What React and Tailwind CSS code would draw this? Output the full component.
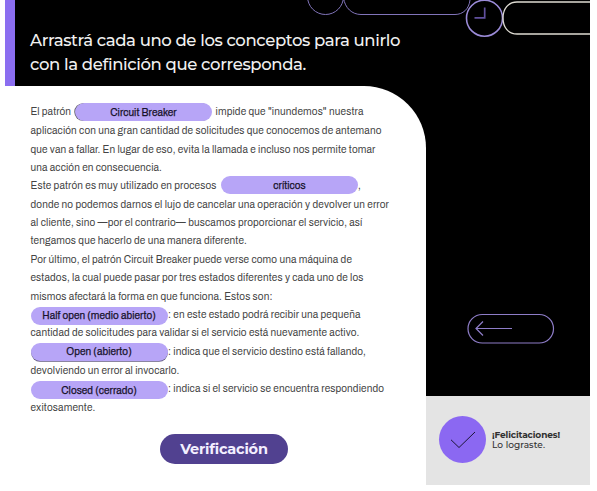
import { useLayoutEffect, useRef, useState } from "react";

// Text tracked so that it fills exactly the given measure.
function Fit({ w, children, className = "" }) {
  const ref = useRef(null);
  const [spacing, setSpacing] = useState(0);
  useLayoutEffect(() => {
    const natural = ref.current.getBoundingClientRect().width;
    setSpacing((w - natural) / children.length);
  }, []);
  return (
    <span ref={ref} className={`inline-block whitespace-pre ${className}`} style={{ letterSpacing: `${spacing}px` }}>
      {children}
    </span>
  );
}

function Pill({ w, children, className = "" }) {
  return (
    <span className={`flex h-[18px] w-[137px] shrink-0 items-center justify-center rounded-full bg-[#b7a5f7] text-[#17132b] ${className}`}>
      <Fit w={w} className="[-webkit-text-stroke:0.25px_#17132b]">{children}</Fit>
    </span>
  );
}

function Row({ h = "h-[18.5px]", children }) {
  return <div className={`flex items-center ${h}`}>{children}</div>;
}

export default function App() {
  return (
    <div className="h-[491px] w-[597px] overflow-hidden bg-white pl-[5px] font-['Archivo','Liberation_Sans',Arial,sans-serif]">
      <div className="relative flex h-[485px] w-[585.4px] flex-col overflow-hidden bg-black">
        <svg className="absolute left-0 top-0" width="586" height="86" viewBox="5 0 586 86" fill="none">
          <g stroke="#8174ba" strokeWidth="1">
            <circle cx="325.5" cy="-3.5" r="18" />
            <path d="M343.5 -2C345 8 352 14.5 361 14.5H455C463 14.5 469 9 470 0" />
          </g>
          <circle cx="484.5" cy="18.2" r="18" stroke="#9b8bd8" strokeWidth="1.6" />
          <path d="M484.7 7.5V17.8H474.5" stroke="#61509e" strokeWidth="1.7" />
          <path d="M592 2H517C508 2 503 9 503 18S508 34 517 34H592" stroke="#dedbd2" strokeWidth="1.3" />
        </svg>
        <header className="flex h-[86px] shrink-0 font-['Montserrat','Inter',sans-serif] text-[16.5px] font-medium leading-6 text-[#f0f0f0]">
          <div className="w-[10px] bg-[#8b6ef0]" />
          <h1 className="flex flex-col items-start pl-[15px] pt-[28px]">
            <Fit w={370}>Arrastrá cada uno de los conceptos para unirlo</Fit>
            <Fit w={276}>con la definición que corresponda.</Fit>
          </h1>
        </header>
        <div className="flex flex-1">
          <main className="flex w-[421px] flex-col rounded-tr-[62px] bg-white pl-[25.5px] pt-[16px] text-[10px] leading-[18px] text-[#444]">
            <Row h="h-[19px]">
              <Fit w={40.5}>El patrón</Fit>
              <Pill w={66.5} className="ml-[4px] mt-px pt-[2px] shadow-[-1px_0_0_-0.3px_#555]">Circuit Breaker</Pill>
              <Fit w={148} className="ml-[3.5px]">impide que "inundemos" nuestra</Fit>
            </Row>
            <Row h="h-[19px]"><Fit w={351}>aplicación con una gran cantidad de solicitudes que conocemos de antemano</Fit></Row>
            <Row h="h-[19px]"><Fit w={345}>que van a fallar. En lugar de eso, evita la llamada e incluso nos permite tomar</Fit></Row>
            <Row h="h-[18px]"><Fit w={131.5}>una acción en consecuencia.</Fit></Row>
            <Row>
              <Fit w={186}>Este patrón es muy utilizado en procesos</Fit>
              <Pill w={32.5} className="-mt-[2px] ml-[4.5px] pt-[2px]">críticos</Pill>
              <span>,</span>
            </Row>
            <Row h="h-[18px]"><Fit w={358.5}>donde no podemos darnos el lujo de cancelar una operación y devolver un error</Fit></Row>
            <Row><Fit w={332}>al cliente, sino —por el contrario— buscamos proporcionar el servicio, así</Fit></Row>
            <Row><Fit w={216.5}>tengamos que hacerlo de una manera diferente.</Fit></Row>
            <Row><Fit w={321.5}>Por último, el patrón Circuit Breaker puede verse como una máquina de</Fit></Row>
            <Row><Fit w={333}>estados, la cual puede pasar por tres estados diferentes y cada uno de los</Fit></Row>
            <Row><Fit w={242}>mismos afectará la forma en que funciona. Estos son:</Fit></Row>
            <Row h="h-[18px]">
              <Pill w={113.5} className="mt-px">Half open (medio abierto)</Pill>
              <Fit w={192.5} className="ml-[0.5px]">: en este estado podrá recibir una pequeña</Fit>
            </Row>
            <Row><Fit w={329}>cantidad de solicitudes para validar si el servicio está nuevamente activo.</Fit></Row>
            <Row h="h-[19px]">
              <Pill w={65.5} className="-mt-px shadow-[0_1px_0_-0.2px_#665e83]">Open (abierto)</Pill>
              <Fit w={198} className="ml-[0.5px]">: indica que el servicio destino está fallando,</Fit>
            </Row>
            <Row h="h-[18px]"><Fit w={149}>devolviendo un error al invocarlo.</Fit></Row>
            <Row h="h-[19px]">
              <Pill w={75.5} className="mt-[2px] pt-px">Closed (cerrado)</Pill>
              <Fit w={216} className="ml-[0.5px]">: indica si el servicio se encuentra respondiendo</Fit>
            </Row>
            <Row><Fit w={65}>exitosamente.</Fit></Row>
            <button className="ml-[129.5px] mt-[17px] flex h-[30px] w-[128px] shrink-0 items-center justify-center rounded-full bg-[#514190] font-['Montserrat','Inter',sans-serif] text-[14.5px] font-bold text-[#f3efff]">
              <Fit w={87.5}>Verificación</Fit>
            </button>
          </main>
          <aside className="flex flex-1 flex-col">
            <div className="flex h-[310px] items-end pb-[52px] pl-[41px]">
              <svg width="88" height="31" viewBox="0 0 88 31" fill="none" stroke="#8e7dc8" strokeWidth="1.2">
                <rect x="1" y="1.5" width="85.5" height="28.5" rx="14.25" />
                <path d="M45 15.5H9M16 8.5L9 15.5L16 22.5" />
              </svg>
            </div>
            <div className="flex flex-1 items-center gap-[6px] bg-[#e4e4e4] pl-[13px] pb-[2px] font-['Montserrat','Inter',sans-serif] text-[9px] leading-[10px] text-[#303030]">
              <span className="flex size-[47px] items-center justify-center rounded-full bg-[#8b68f2]">
                <svg width="26" height="18" viewBox="0 0 26 18" fill="none" stroke="#1c1538" strokeWidth="1">
                  <path d="M1 8.8L9 16.5L25 1" />
                </svg>
              </span>
              <p className="flex flex-col items-start">
                <Fit w={68} className="font-bold">¡Felicitaciones!</Fit>
                <Fit w={53} className="font-medium">Lo lograste.</Fit>
              </p>
            </div>
          </aside>
        </div>
      </div>
    </div>
  );
}
